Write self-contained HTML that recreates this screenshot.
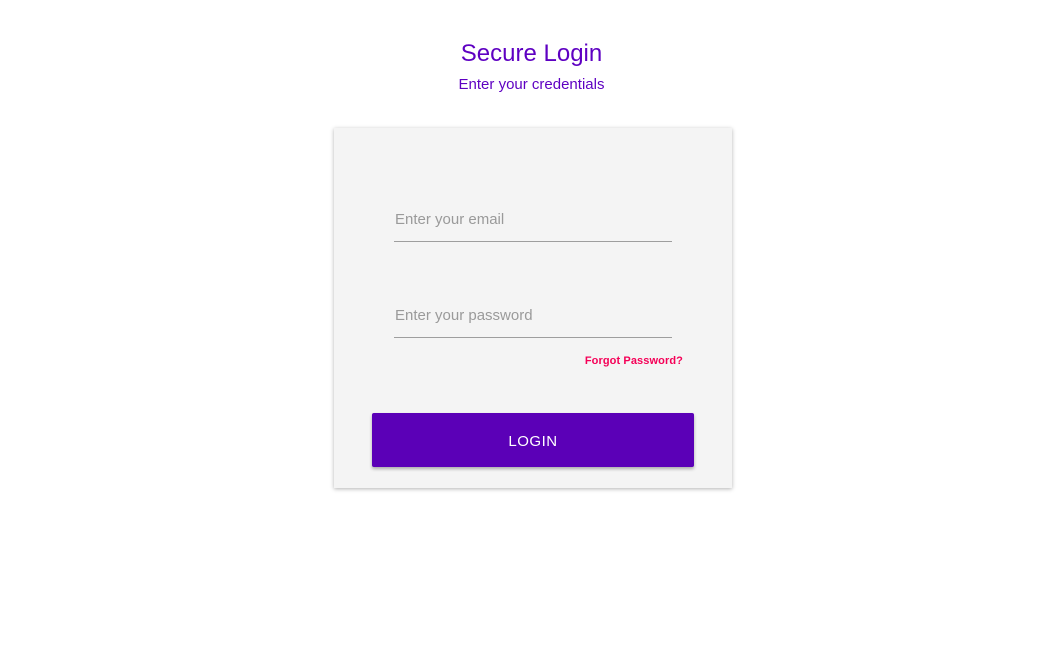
<!DOCTYPE html>
<html><head><style>
body{margin:0;width:1063px;height:665px;background:#fff;font-family:"Liberation Sans",sans-serif;position:relative;overflow:hidden}
.t{position:absolute;left:0;width:1063px;text-align:center;color:#5e00c2}
.card{position:absolute;left:334px;top:128px;width:398px;height:360px;background:#f4f4f4;box-shadow:0 1px 4px rgba(0,0,0,.3)}
.in{position:absolute;left:60px;width:278px;border-bottom:1px solid #9e9e9e;color:#9a9a9a;font-size:15px;height:30px;line-height:16px;padding-left:1px;box-sizing:border-box}
.fp{position:absolute;right:49px;top:227px;color:#f50057;font-weight:bold;font-size:11px;letter-spacing:0.1px}
.btn{position:absolute;left:38px;top:285px;width:322px;height:54px;background:#5b00b7;border-radius:2px;box-shadow:0 2px 3px rgba(0,0,0,.3);color:#fff;font-size:15px;letter-spacing:.5px;text-align:center;line-height:58px}
</style></head><body>
<div class="t" style="top:40px;font-size:24px">Secure Login</div>
<div class="t" style="top:76px;font-size:15px">Enter your credentials</div>
<div class="card">
<div class="in" style="top:84px">Enter your email</div>
<div class="in" style="top:180px">Enter your password</div>
<div class="fp">Forgot Password?</div>
<div class="btn">LOGIN</div>
</div>
</body></html>
